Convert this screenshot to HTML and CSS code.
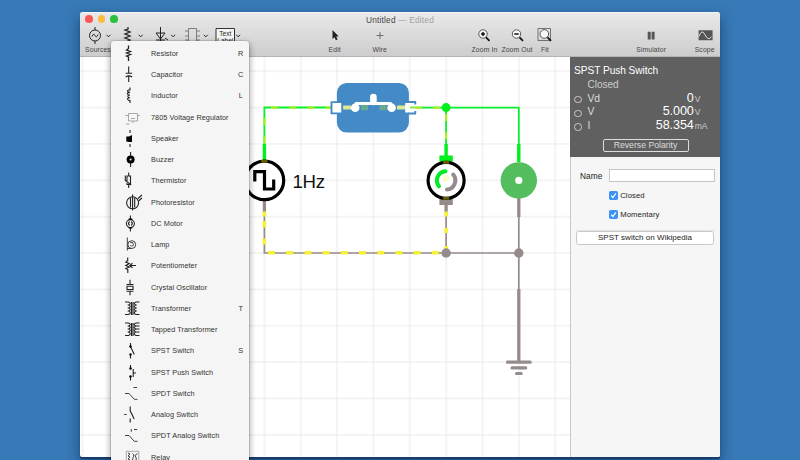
FILE: index.html
```html
<!DOCTYPE html>
<html lang="en">
<head>
<meta charset="utf-8">
<title>Untitled</title>
<link rel="stylesheet" href="styles.css">
</head>
<body>
<main class="window">
  <header class="chrome">
    <div class="titlebar">
      <div class="lights"><i class="red"></i><i class="yellow"></i><i class="green"></i></div>
      <div class="title">Untitled <span>— Edited</span></div>
    </div>
    <div class="toolbar">
      <div class="tool palette sources">
        <svg viewBox="82 26 32 18"><circle cx="95" cy="35.5" r="5.5"/><path d="M95 27v3M95 41v3M92 36.500q1.500-4 3 -1t3-1M106.500 34.800l2 2 2-2"/></svg>
        <span>Sources</span>
      </div>
      <div class="tool palette"><svg viewBox="114 26 32 18"><path class="bold" d="M128 27v2l-3 1 5 2-5 2 5 2-5 2 5 2-2 1v3"/><path d="M138.700 34.800l2 2 2-2"/></svg></div>
      <div class="tool palette"><svg viewBox="146 26 34 18"><path d="M160.500 27v17M156 33h9l-4.500 6zM156 40h9M165 38l3 2M171.200 34.800l2 2 2-2"/></svg></div>
      <div class="tool palette"><svg viewBox="180 26 32 18"><path class="soft" d="M188.500 28.500h8v18h-8zM185 31h3M185 36h3M185 40h3M197 31h3M197 36h3M197 40h3"/><path d="M203.800 34.800l2 2 2-2"/></svg></div>
      <div class="tool palette"><svg viewBox="212 26 32 18"><path class="fillwhite" d="M216 28.500h18.500v18H216z"/><text x="225.300" y="36">Text</text><text x="225.300" y="42.500">Label</text><path d="M236.200 34.800l2 2 2-2"/></svg></div>
      <div class="tool edit"><svg viewBox="0 0 20 18"><path class="ink" d="M7.500 4v9l2-1.800 1.400 3 1.700-.8-1.400-2.900h2.600z"/></svg><span>Edit</span></div>
      <div class="tool wire"><svg viewBox="0 0 20 18"><path class="hair" d="M10 6v7M6.500 9.500h7"/></svg><span>Wire</span></div>
      <div class="tool zoomin"><svg viewBox="0 0 20 18"><circle class="lens" cx="9" cy="8" r="4.200"/><path class="plus" d="M9 6v4M7 8h4"/><path class="handle" d="M12 11.300l3.500 3.500"/></svg><span>Zoom In</span></div>
      <div class="tool zoomout"><svg viewBox="0 0 20 18"><circle class="lens" cx="9.500" cy="8" r="4.200"/><path class="plus" d="M7.300 8h4.400"/><path class="handle" d="M12.500 11.300l3.500 3.500"/></svg><span>Zoom Out</span></div>
      <div class="tool fit"><svg viewBox="0 0 20 18"><path class="hair" d="M3 2.500h12.500v12H3z"/><circle class="lens" cx="9.300" cy="8" r="4.300"/><path class="handle" d="M12.500 11.300l3.500 3.500"/></svg><span>Fit</span></div>
      <div class="tool simulator"><svg viewBox="0 0 20 18"><path class="pause" d="M6.700 5.700h3v7.800h-3zM10.600 5.700h3v7.800h-3z"/></svg><span>Simulator</span></div>
      <div class="tool scope"><svg viewBox="0 0 20 18"><path class="pause" d="M3.600 4.300h14v10h-14z"/><path class="trace" d="M4 10.300q3-8 6-1.500t6.500 2"/></svg><span>Scope</span></div>
    </div>
  </header>
  <div class="content">
    <svg class="canvas" viewBox="80 57 490 400">
      <defs>
        <pattern id="grid" x="264.400" y="107.600" width="36.360" height="36.360" patternUnits="userSpaceOnUse"><path class="gridline" d="M0 0H36.360M0 0V36.360M0 36.360H36.360M36.360 0V36.360"/></pattern>
      </defs>
      <rect x="80" y="57" width="490" height="400" fill="url(#grid)"/>
      <g class="live">
        <path d="M264.400 146v-38.500H332M414 107.600h104.800V146"/><path d="M446.100 107.600V146"/>
        <path class="lead" d="M264.400 144v18M446.100 144v12M518.800 144v18"/>
        <path class="terminal" d="M439.400 155.500h13.400v6h-13.400z"/>
      </g>
      <g class="neutral">
        <path d="M264.400 200v53H518.800M446.100 205v48M518.800 200v90"/>
        <path class="lead" d="M264.400 200v13M446.100 205v8M518.800 198v19M518.800 289v72"/>
        <path class="terminal" d="M439.400 198.500h13.400v6.500h-13.400z"/>
        <path class="ground" d="M507.500 362.200h22.700M512 367.900h13.700M516.500 373.500h4.700"/>
        <circle cx="518.800" cy="253" r="4.700"/>
      </g>
      <g class="current">
        <path class="onlive" d="M271 107.600h62M264.400 118v30M415 107.600h28M446.100 114v26"/>
        <path d="M268 252.800H440"/>
        <path class="piece" d="M264.400 211.500v5M264.400 221v6.500M264.400 238.500v6M446.100 211.500v5M446.100 228v5M446.100 246v4"/>
      </g>
      <circle cx="446.100" cy="253" r="4.700" fill="#968b8b"/>
      <circle cx="446.100" cy="107.600" r="4.500" fill="#00f01d"/>
      <g class="switch">
        <rect x="336.900" y="82.900" width="72" height="49.700" rx="10"/>
        <path class="inside" d="M343 107.600h8M397 107.600h9"/><path class="glow" d="M361 107.600h7M379.500 107.600h7"/>
        <path class="pin" d="M331.500 102.100h10.700v11.300h-10.700z"/>
        <path class="pinbody" d="M405.200 103h10.800v9.500h-10.800z"/><path class="pin open" d="M416 102h-8M408 113.500h8M415.300 102v2.500M415.300 113.500v-2.500"/><path class="stub" d="M410 107.600h6"/>
        <circle cx="355.200" cy="107.800" r="4.300"/><circle cx="391.600" cy="107.800" r="4.300"/>
        <path class="bar" d="M355 106l1-2.500H390.500l2 2.500"/><path class="button" d="M373.400 102v-5"/>
      </g>
      <g class="source"><circle cx="264.400" cy="180.400" r="19.300"/><path d="M254.800 181.500v-9.800h9.700V189h9.200v-9.500"/><path class="tint" d="M261.300 161.300h6.200"/></g>
      <text x="292.500" y="187.500" textLength="32.500">1Hz</text>
      <g class="motor"><circle cx="446.100" cy="180.400" r="18"/><path class="arcgreen" d="M445.500 171.300A9.200 9.200 0 0 0 439 186.300"/><path class="arcgrey" d="M453.200 174.600A9.200 9.200 0 0 1 447 189.600"/><circle class="hub" cx="446.100" cy="178.500" r="3.500"/><path class="tint" d="M443 162.300h6.200M443 198.300h6.200"/></g>
      <circle cx="518.800" cy="180.400" r="18.200" fill="#54bd5e"/><circle cx="518.800" cy="180.400" r="3.600" fill="#fff"/>
    </svg>
    <aside class="inspector">
      <section class="readout">
        <h1>SPST Push Switch</h1>
        <p>Closed</p>
        <div class="meter"><i></i><span>Vd</span><b>0</b><em>V</em></div>
        <div class="meter"><i></i><span>V</span><b>5.000</b><em>V</em></div>
        <div class="meter"><i></i><span>I</span><b>58.354</b><em>mA</em></div>
        <button class="reverse">Reverse Polarity</button>
      </section>
      <section class="form">
        <label class="name"><span>Name</span><input type="text"></label>
        <div class="check"><svg viewBox="0 0 9 9"><path d="M2.200 4.700l1.700 1.800 3-4.200"/></svg><span>Closed</span></div>
        <div class="check"><svg viewBox="0 0 9 9"><path d="M2.200 4.700l1.700 1.800 3-4.200"/></svg><span>Momentary</span></div>
        <hr>
        <button class="wiki">SPST switch on Wikipedia</button>
      </section>
    </aside>
  </div>
</main>

<ul class="menu">
  <li><svg viewBox="0 0 24 21"><path class="bold" d="M8.500 2.500v3L6.500 7l4 1.500-4 1.500 4 1.500-4 1.500 2 1v4"/></svg><span>Resistor</span><kbd>R</kbd></li>
  <li><svg viewBox="0 0 24 21"><path d="M8.700 2.500V9M5.700 9.300h6.500M5.700 13q3-2.200 6.500 0M8.700 12v6"/></svg><span>Capacitor</span><kbd>C</kbd></li>
  <li><svg viewBox="0 0 24 21"><path d="M10 2.500v2.500H8.500q-2.500 1.500 1.500 2.500-4.500 0-1.500 2.500H10q-4 0-1 2.800h1q-4.500 .5-1 2.700H10v2.500"/></svg><span>Inductor</span><kbd>L</kbd></li>
  <li><svg viewBox="0 0 24 21"><path class="soft" d="M8.500 6.500h9V14h-9zM5 8.500h3.500M17.500 8.500H20M13 14v2M6 17h3.500M11 11.500h4"/></svg><span>7805 Voltage Regulator</span></li>
  <li><svg viewBox="0 0 24 21"><path d="M10 2v3M10 16v3"/><path class="solid" d="M6.300 8.500h2.700l3-1.500v7H9l-2.700-.5z"/></svg><span>Speaker</span></li>
  <li><svg viewBox="0 0 24 21"><path d="M10.600 3v15"/><circle class="solid" cx="10.600" cy="10.500" r="4"/><circle class="paper" cx="10.600" cy="10.500" r="1"/></svg><span>Buzzer</span></li>
  <li><svg viewBox="0 0 24 21"><path d="M8.700 2.500v3.500M8.700 14.500V18M7 6h3.500v8.500H7zM5.300 5.500v5l6 4.500"/></svg><span>Thermistor</span></li>
  <li><svg viewBox="0 0 24 21"><circle cx="12.600" cy="10.800" r="6"/><path d="M12.600 2.500v16M10.500 6v9.500M14.700 6v9.500M18 6.500l4-3.500M18.500 9l3.500-3"/></svg><span>Photoresistor</span></li>
  <li><svg viewBox="0 0 24 21"><circle cx="10.400" cy="10.600" r="4"/><path d="M10.400 2.500v4M10.400 14.500V18.500M9.500 8.500q-2 2 0 4M11.300 8.500q2 2 0 4"/><path class="solid" d="M8.700 5.500h3.500V7H8.700zM8.700 14h3.500v1.500H8.700z"/></svg><span>DC Motor</span></li>
  <li><svg viewBox="0 0 24 21"><path class="thin" d="M7.300 3.500v13M7.300 14.500h4M10.300 8.500q3-1 3 1.800t-3 1.200"/><circle class="thin" cx="11.800" cy="10.600" r="3.900"/></svg><span>Lamp</span></li>
  <li><svg viewBox="0 0 24 21"><path d="M7.700 2.500v3L5.800 7l3.500 1.500-3.500 2 3.500 1.500-3.500 1.500 2 1v3.500M16 10.500H10M12.500 8.300l-2.700 2.200 2.700 2.200"/></svg><span>Potentiometer</span></li>
  <li><svg viewBox="0 0 24 21"><path d="M10 2.800v4.700M6.500 7.500h7M7 9.300h6v3.200H7zM6.500 14.200h7M10 14.200v4"/></svg><span>Crystal Oscillator</span></li>
  <li><svg viewBox="0 0 24 21"><path d="M5 4h3.500q3.500 1.500 0 3 3.500 1.500 0 3 3.500 1.500 0 3 3.500 1.500 0 3.500H5M19.500 4H16q-3.500 1.500 0 3-3.500 1.500 0 3-3.500 1.500 0 3-3.500 1.500 0 3.500h3.500M11.500 4v13M13 4v13"/></svg><span>Transformer</span><kbd>T</kbd></li>
  <li><svg viewBox="0 0 24 21"><path d="M5 4h3.500q3.500 1.500 0 3 3.500 1.500 0 3 3.500 1.500 0 3 3.500 1.500 0 3.500H5M19.500 4H16q-3.500 1.500 0 3-3.500 1.500 0 3-3.500 1.500 0 3-3.500 1.500 0 3.500h3.500M11.500 4v13M13 4v13M15 7h4.500M15 10h4.500M15 13h4.500"/></svg><span>Tapped Transformer</span></li>
  <li><svg viewBox="0 0 24 21"><path d="M10.500 3v4M10.500 14.500v4M10.500 6.500l3.800 8"/><circle class="solid" cx="10.500" cy="6.500" r="1.200"/><circle class="solid" cx="10.500" cy="14.500" r="1.200"/></svg><span>SPST Switch</span><kbd>S</kbd></li>
  <li><svg viewBox="0 0 24 21"><path d="M10.500 3v4M10.500 14.500v4M13.200 7v8M13.200 11H16"/><circle class="solid" cx="10.500" cy="6.500" r="1.200"/><circle class="solid" cx="10.500" cy="14.500" r="1.200"/></svg><span>SPST Push Switch</span></li>
  <li><svg viewBox="0 0 24 21"><path class="thin" d="M13.500 4.500H17M5 10.500h4l5.300 5.800h3.200"/></svg><span>SPDT Switch</span></li>
  <li><svg viewBox="0 0 24 21"><path d="M10.200 2.500v4.300l4 8.200M10.200 14.500v4M4.300 10.500h2.200"/></svg><span>Analog Switch</span></li>
  <li><svg viewBox="0 0 24 21"><path class="thin" d="M14 4.500h3.200M11.300 4v2.800M5 10.500h4l5.300 5.800h3.200"/></svg><span>SPDT Analog Switch</span></li>
  <li><svg viewBox="0 0 24 21"><path class="soft" d="M6.300 4.300h12.500v14H6.300z"/><path class="thin" d="M8 6l2 1-2 2 2 1-2 2 2 1-2 2M12.500 6.500q2 1 1 3t-1 4M17.500 6.500l-2.500 2q2 2 1 6"/></svg><span>Relay</span></li>
</ul>
</body>
</html>
```

FILE: styles.css
```css
* { box-sizing: border-box; }
html, body { height: 100%; }
body { margin: 0; padding: 12px 80px 0; overflow: hidden; position: relative; background: #377ab7; font-family: "Liberation Sans", Arial, sans-serif; color: #333; }
svg { display: block; fill: none; }
button, input { font-family: inherit; margin: 0; }

.window { width: 640px; height: 445px; border-radius: 3px 3px 2px 2px; overflow: hidden; display: flex; flex-direction: column; background: #fff; box-shadow: 0 2px 1px #173c66, 0 6px 14px rgba(0, 20, 60, .5); }
.chrome { height: 45px; flex: none; background: linear-gradient(#eae9ea, #cecdce); border-bottom: 1px solid #b5b4b5; border-top: 1px solid #f4f4f4; }
.titlebar { height: 13px; display: flex; position: relative; }
.lights { display: flex; gap: 5px; padding: 2px 0 0 5px; }
.lights i { width: 7.700px; height: 7.700px; border-radius: 50%; }
.red { background: #fc5753; }
.yellow { background: #fdbc40; }
.green { background: #27c13c; }
.title { position: absolute; left: 0; right: 0; top: 1px; text-align: center; font-size: 8.300px; line-height: 12px; letter-spacing: .2px; color: #444; }
.title span { color: #a3a2a3; }

.toolbar { display: flex; padding-left: 2px; }
.tool { display: flex; flex-direction: column; align-items: center; flex: none; font-size: 6.800px; line-height: 10px; color: #444; white-space: nowrap; width: 32px; }
.tool svg { width: 20px; height: 18px; }
.tool span { letter-spacing: .12px; margin-top: .5px; }
.palette svg { width: 100%; stroke: #222; stroke-width: 1; }
.palette .bold { stroke-width: 1.300; }
.palette .soft { stroke: #666; stroke-width: .8; }
.palette .fillwhite { fill: #f5f5f5; stroke: #333; }
.palette text { font: 6.500px "Liberation Sans", sans-serif; text-anchor: middle; stroke: none; fill: #222; }
.palette:nth-child(3) { width: 34px; }
.edit { width: 45px; margin-left: 68.200px; }
.wire { width: 45px; }
.zoomin { width: 32.600px; margin-left: 66px; }
.zoomout { width: 32.400px; }
.fit { width: 23.400px; }
.simulator { width: 40px; margin-left: 74.600px; }
.scope { width: 30px; margin-left: 18.500px; }
.ink { fill: #222; }
.hair { stroke: #555; stroke-width: .8; }
.lens { fill: #f8f8f8; stroke: #333; stroke-width: .8; }
.plus { stroke: #111; stroke-width: 1.500; }
.handle { stroke: #111; stroke-width: 1.800; }
.pause { fill: #555; }
.trace { stroke: #eee; stroke-width: .9; }

.content { flex: 1; display: flex; min-height: 0; }
.canvas { width: 490px; height: 400px; flex: none; }
.gridline { stroke: #e9e9ed; stroke-width: 1; }
.canvas text { font: 18.700px "Liberation Sans", sans-serif; fill: #111; }
.live path { stroke: #0bf02c; stroke-width: 1.800; }
.live .lead { stroke: #00f01d; stroke-width: 3.400; }
.live .terminal { fill: #00f01d; stroke: none; }
.neutral path { stroke: #968b8b; stroke-width: 1.700; }
.neutral .lead { stroke-width: 3.300; }
.neutral .terminal, .neutral circle { fill: #968b8b; stroke: none; }
.neutral .ground { stroke-width: 3.200; stroke-linecap: round; }
.current path { stroke: #f5f235; stroke-width: 3.600; stroke-dasharray: 7 11.200; }
.current .piece { stroke-dasharray: none; }
.current .onlive { stroke: #a9ee20; stroke-width: 2.200; }
.switch rect { fill: #438ac6; }
.switch circle { fill: #fff; }
.switch .pin { fill: #fff; stroke: #438ac6; stroke-width: 1.900; }
.switch .pin.open { fill: none; }
.switch .pinbody { fill: #fff; }
.switch .inside { stroke: #dcea92; stroke-width: 4; }
.switch .glow { stroke: #65aa91; stroke-width: 5.500; }
.switch .stub { stroke: #86e83c; stroke-width: 2; }
.switch .bar { stroke: #fff; stroke-width: 3; stroke-linejoin: round; }
.switch .button { stroke: #fff; stroke-width: 6.600; stroke-linecap: round; }
.source circle, .motor circle { stroke: #000; stroke-width: 3.200; fill: #fff; }
.source path { stroke: #000; stroke-width: 3.200; }
.source .tint, .motor .tint { stroke: #655c00; stroke-width: 3; }
.motor .arcgreen { stroke: #00ec25; stroke-width: 4; stroke-linecap: round; }
.motor .arcgrey { stroke: #968b8b; stroke-width: 4; stroke-linecap: round; }
.motor .hub { fill: #fdfbd0; stroke: none; }

.inspector { width: 150px; background: #f6f6f6; display: flex; flex-direction: column; border-left: 1px solid #c8c8c8; }
.readout { height: 100px; background: #606060; color: #ddd; padding: 6.500px 0 0 3px; display: flex; flex-direction: column; margin-left: -1px; padding-left: 4px; }
h1 { font-size: 10.200px; line-height: 14px; font-weight: 400; color: #fff; margin: 0; letter-spacing: -.07px; }
.readout p { margin: 0 0 0 13.500px; font-size: 10.100px; line-height: 14px; color: #ccc; letter-spacing: -.05px; }
.meter { display: flex; height: 13.900px; line-height: 13.900px; font-size: 10.300px; align-items: center; }
.meter i { width: 7.500px; height: 7.500px; border: 1px solid #ccc; border-radius: 50%; margin-top: 2px; }
.meter span { margin-left: 6px; width: 30px; }
.meter b { margin-left: auto; font-size: 12.600px; font-weight: 400; color: #fff; letter-spacing: -.1px; }
.meter em { width: 26.300px; padding-left: 1px; font-size: 8.600px; font-style: normal; color: #ccc; padding-top: 2px; }
.reverse { width: 86px; height: 13px; margin: 5.500px 0 0 28.500px; padding: 0; flex: none; border: 1px solid #ddd; border-radius: 2px; background: none; color: #ddd; font-size: 8.700px; line-height: 10px; white-space: nowrap; }
.form { padding: 12px 5px 0; display: flex; flex-direction: column; }
.name { display: flex; align-items: center; gap: 6px; font-size: 8.300px; color: #222; padding-left: 4px; }
.name span { width: 23px; letter-spacing: .1px; }
.name input { width: 106px; height: 13px; border: 1px solid #c5c5c5; background: #fff; padding: 0; margin-left: 0; }
.check { display: flex; align-items: center; gap: 2.500px; margin: 8px 0 0 32.700px; height: 11.300px; font-size: 7.700px; color: #222; }
.name + .check { margin-top: 7.500px; }
.check svg { width: 9px; height: 9px; border-radius: 1.800px; background: #3b93f5; stroke: #fff; stroke-width: 1.200; }
.check span { letter-spacing: .1px; }
hr { width: 100%; height: 1px; border: 0; background: #e4e4e4; margin: 10px 0 0; }
.wiki { height: 14px; width: 138px; margin: 0; border: 1px solid #c8c8c8; border-radius: 2.500px; background: #fff; color: #222; font-size: 8px; line-height: 12px; padding: 0; white-space: nowrap; letter-spacing: .04px; }

.menu { position: absolute; left: 110.500px; top: 41px; width: 138.500px; height: 440px; margin: 0; padding: 1.700px 0 0; list-style: none; background: #f5f5f5; border-radius: 3px; box-shadow: 0 0 0 .5px rgba(0, 0, 0, .2), 0 3px 7px rgba(0, 0, 0, .45); }
.menu li { height: 21.250px; display: flex; align-items: center; padding: 0 5px 0 9.500px; font-size: 7.300px; color: #333; }
.menu svg { width: 24px; height: 21px; margin-right: 7px; stroke: #222; stroke-width: 1.100; flex: none; }
.menu span { letter-spacing: .06px; white-space: nowrap; }
.menu kbd { font: inherit; margin-left: auto; width: 6.500px; text-align: center; }
.menu .bold { stroke-width: 1.300; }
.menu .thin { stroke-width: .85; }
.menu .soft { stroke: #888; stroke-width: .7; }
.menu .solid { fill: #000; stroke: none; }
.menu .paper { fill: #f5f5f5; stroke: none; }
```
